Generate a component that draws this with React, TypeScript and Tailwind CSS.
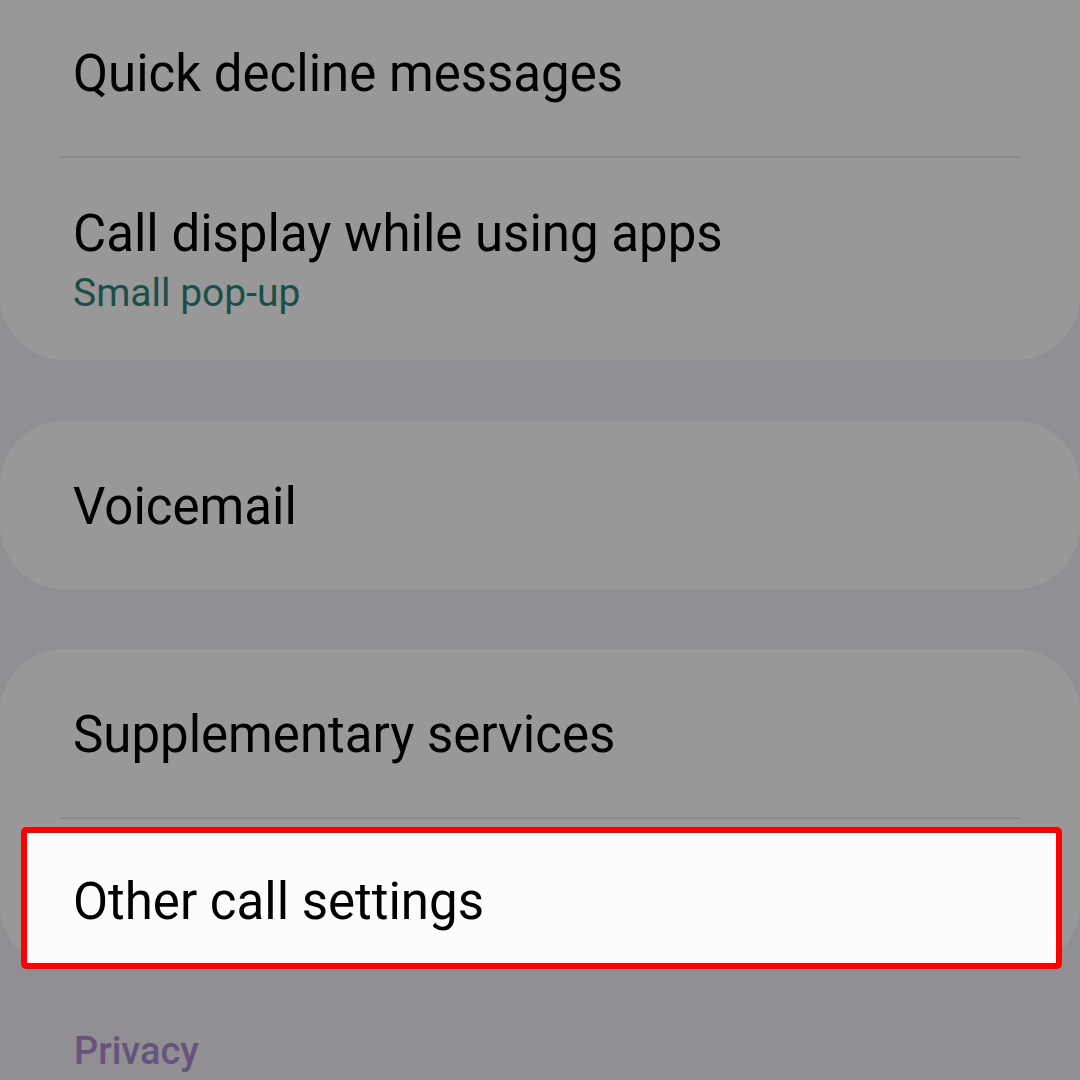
import React from "react";

// Ряд настройки в карточке
const Row = ({
  title,
  subtitle,
  className = "",
}: {
  title: string;
  subtitle?: string;
  className?: string;
}) => (
  <div className={`px-[73px] ${className}`}>
    <p className="text-[51px] leading-[62px] text-black">{title}</p>
    {subtitle && (
      <p className="mt-[5px] text-[39px] leading-[46px] text-[#1b4e48]">
        {subtitle}
      </p>
    )}
  </div>
);

const Divider = () => <div className="mx-[60px] h-[2px] bg-[#8a8a8a]" />;

export default function App() {
  return (
    <div
      className="h-[1080px] w-[1080px] overflow-hidden bg-[#918f94]"
      style={{ fontFamily: "Roboto, 'Noto Sans', sans-serif" }}
    >
      {/* карточка 1 (верх обрезан) */}
      <div className="rounded-b-[64px] bg-[#989898]">
        <Row title="Quick decline messages" className="pt-[43px] pb-[51px]" />
        <Divider />
        <Row
          title="Call display while using apps"
          subtitle="Small pop-up"
          className="pt-[45px] pb-[44px]"
        />
      </div>

      {/* карточка 2 */}
      <div className="mt-[61px] rounded-[64px] bg-[#989898]">
        <Row title="Voicemail" className="pt-[55px] pb-[51px]" />
      </div>

      {/* карточка 3 */}
      <div className="mt-[60px] rounded-[64px] bg-[#989898]">
        <Row title="Supplementary services" className="pt-[55px] pb-[51px]" />
        <Divider />
        <div className="mt-[8px] mb-[14px] ml-[21px] mr-[18px] rounded-[5px] border-[6px] border-[#ff0000] bg-[#fcfcfc] pl-[46px] pt-[38px] pb-[30px]">
          <p className="text-[51px] leading-[62px] text-black">
            Other call settings
          </p>
        </div>
      </div>

      {/* заголовок раздела */}
      <p className="mt-[60px] px-[74px] text-[38px] leading-[44px] font-medium text-[#66547d]">
        Privacy
      </p>
    </div>
  );
}
